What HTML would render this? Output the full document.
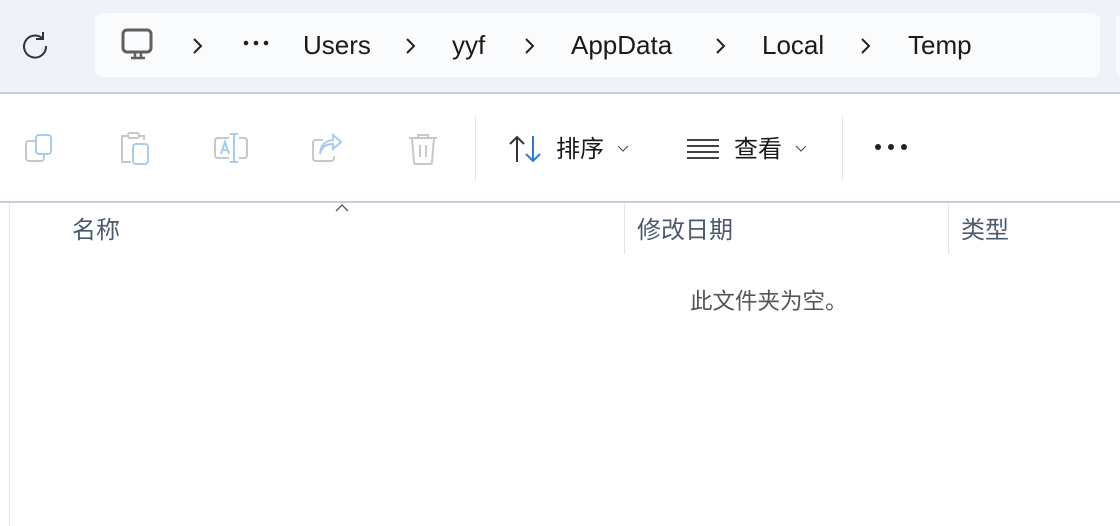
<!DOCTYPE html>
<html><head><meta charset="utf-8"><style>
body{margin:0;width:1120px;height:526px;overflow:hidden;background:#fff;font-family:"Liberation Sans","Noto Sans CJK SC",sans-serif;position:relative}
.top{position:absolute;left:0;top:0;width:1120px;height:92px;background:#eff3f9;border-bottom:2px solid #c5cedb}
.addr{position:absolute;left:95px;top:13px;width:1005px;height:64px;background:#f9fbfd;border-radius:8px}
.addr2{position:absolute;left:1116px;top:13px;width:20px;height:64px;background:#f9fbfd;border-radius:8px}
.t{position:absolute;font-size:26px;color:#1a1a1a;top:28px;line-height:34px}
.ch{position:absolute;top:37px}
.tool{position:absolute;left:0;top:94px;width:1120px;height:107px;background:#fff;border-bottom:2px solid #c5cedb}
.sep{position:absolute;width:1px;background:#e5e5e5}
.cn{position:absolute;font-size:24px;color:#1a1a1a;line-height:30px}
.hd{position:absolute;font-size:24px;color:#4c5a6e;top:216px;line-height:30px}
</style></head><body>
<div class="top">
<svg style="position:absolute;left:20px;top:30px" width="30" height="30" viewBox="0 0 30 30"><path d="M23 9 A11 11 0 1 0 26 16" fill="none" stroke="#333" stroke-width="2"/><path d="M23 2 V9 H16" fill="none" stroke="#333" stroke-width="2"/></svg>
<div class="addr"></div><div class="addr2"></div>
<svg style="position:absolute;left:121px;top:28px" width="34" height="32" viewBox="0 0 34 32"><rect x="2" y="2" width="28" height="22" rx="4" fill="none" stroke="#5f5f5f" stroke-width="3"/><path d="M10 30 H24 M14 24 V30 M20 24 V30" stroke="#5f5f5f" stroke-width="2.5"/></svg>
<svg class="ch" style="left:192px" width="12" height="18" viewBox="0 0 12 18"><path d="M2 2 L9 9 L2 16" fill="none" stroke="#222" stroke-width="2"/></svg>
<svg style="position:absolute;left:243px;top:40px" width="26" height="8"><circle cx="3" cy="3" r="2.3" fill="#222"/><circle cx="13" cy="3" r="2.3" fill="#222"/><circle cx="23" cy="3" r="2.3" fill="#222"/></svg>
<div class="t" style="left:303px">Users</div>
<svg class="ch" style="left:405px" width="12" height="18" viewBox="0 0 12 18"><path d="M2 2 L9 9 L2 16" fill="none" stroke="#222" stroke-width="2"/></svg>
<div class="t" style="left:452px">yyf</div>
<svg class="ch" style="left:524px" width="12" height="18" viewBox="0 0 12 18"><path d="M2 2 L9 9 L2 16" fill="none" stroke="#222" stroke-width="2"/></svg>
<div class="t" style="left:571px">AppData</div>
<svg class="ch" style="left:715px" width="12" height="18" viewBox="0 0 12 18"><path d="M2 2 L9 9 L2 16" fill="none" stroke="#222" stroke-width="2"/></svg>
<div class="t" style="left:762px">Local</div>
<svg class="ch" style="left:860px" width="12" height="18" viewBox="0 0 12 18"><path d="M2 2 L9 9 L2 16" fill="none" stroke="#222" stroke-width="2"/></svg>
<div class="t" style="left:908px">Temp</div>
</div>
<div class="tool">
<svg style="position:absolute;left:24px;top:40px" width="30" height="30" viewBox="0 0 30 30"><rect x="2" y="7" width="18" height="20" rx="3" fill="none" stroke="#c8c8c8" stroke-width="2"/><rect x="12" y="1" width="15" height="19" rx="3" fill="#fff" stroke="#a8ccf0" stroke-width="2"/></svg>
<svg style="position:absolute;left:119px;top:38px" width="32" height="34" viewBox="0 0 32 34"><path d="M8 4 H3 V30 H12" fill="none" stroke="#c8c8c8" stroke-width="2"/><path d="M20 4 H25 V8" fill="none" stroke="#c8c8c8" stroke-width="2"/><rect x="9" y="1" width="11" height="5" rx="2" fill="none" stroke="#c8c8c8" stroke-width="2"/><rect x="14" y="12" width="15" height="20" rx="3" fill="none" stroke="#a8ccf0" stroke-width="2"/></svg>
<svg style="position:absolute;left:213px;top:38px" width="36" height="34" viewBox="0 0 36 34"><path d="M16 6 H5 Q2 6 2 9 V23 Q2 26 5 26 H16 M26 6 H31 Q34 6 34 9 V23 Q34 26 31 26 H26" fill="none" stroke="#c8c8c8" stroke-width="2"/><path d="M17 2 H25 M21 2 V30 M17 30 H25 M8 22 L12 10 L16 22 M9.5 18 H14.5" fill="none" stroke="#a8ccf0" stroke-width="2"/></svg>
<svg style="position:absolute;left:311px;top:38px" width="34" height="32" viewBox="0 0 34 32"><path d="M12 8 H5 Q2 8 2 11 V26 Q2 29 5 29 H20 Q23 29 23 26 V24" fill="none" stroke="#c8c8c8" stroke-width="2"/><path d="M9 22 Q11 12 22 12 V17 L30 10 L22 3 V8 Q10 9 9 22 Z" fill="none" stroke="#a8ccf0" stroke-width="2"/></svg>
<svg style="position:absolute;left:407px;top:38px" width="32" height="34" viewBox="0 0 32 34"><path d="M2 6 H30 M11 6 V3 H21 V6 M5 6 L7 30 Q7 32 9 32 H23 Q25 32 25 30 L27 6 M13 13 V25 M19 13 V25" fill="none" stroke="#c8c8c8" stroke-width="2"/></svg>
<div class="sep" style="left:475px;top:22px;height:65px"></div>
<svg style="position:absolute;left:508px;top:40px" width="34" height="30" viewBox="0 0 34 30"><path d="M9 28 V3 M2 10 L9 3 L16 10" fill="none" stroke="#333" stroke-width="2"/><path d="M25 2 V27 M18 20 L25 27 L32 20" fill="none" stroke="#2b7ad6" stroke-width="2"/></svg>
<div class="cn" style="left:556px;top:41px">排序</div>
<svg style="position:absolute;left:617px;top:51px" width="12" height="8"><path d="M1 1 L6 6 L11 1" fill="none" stroke="#555" stroke-width="1.2"/></svg>
<svg style="position:absolute;left:686px;top:44px" width="34" height="22" viewBox="0 0 34 22"><path d="M1 2 H33 M1 8 H33 M1 14 H33 M1 20 H33" stroke="#444" stroke-width="2"/></svg>
<div class="cn" style="left:734px;top:41px">查看</div>
<svg style="position:absolute;left:795px;top:51px" width="12" height="8"><path d="M1 1 L6 6 L11 1" fill="none" stroke="#555" stroke-width="1.2"/></svg>
<div class="sep" style="left:842px;top:22px;height:65px"></div>
<svg style="position:absolute;left:874px;top:48px" width="34" height="10"><circle cx="4" cy="5" r="3" fill="#222"/><circle cx="17" cy="5" r="3" fill="#222"/><circle cx="30" cy="5" r="3" fill="#222"/></svg>
</div>
<div style="position:absolute;left:9px;top:203px;width:1px;height:323px;background:#e6e6e6"></div>
<svg style="position:absolute;left:334px;top:203px" width="16" height="10"><path d="M2 8 L8 2 L14 8" fill="none" stroke="#555" stroke-width="1.3"/></svg>
<div class="hd" style="left:72px">名称</div>
<div class="sep" style="left:624px;top:204px;height:50px"></div>
<div class="hd" style="left:637px">修改日期</div>
<div class="sep" style="left:948px;top:204px;height:50px"></div>
<div class="hd" style="left:961px">类型</div>
<div style="position:absolute;left:690px;top:287px;font-size:22.5px;color:#555;line-height:30px">此文件夹为空。</div>
</body></html>
